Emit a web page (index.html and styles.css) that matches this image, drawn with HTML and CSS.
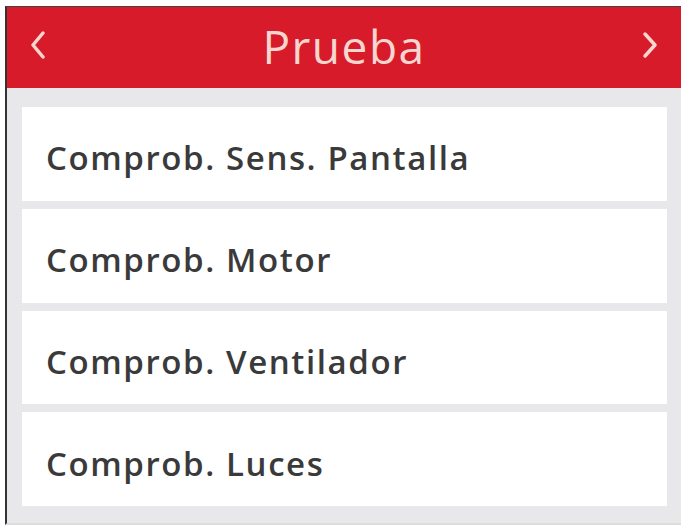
FILE: index.html
```html
<!DOCTYPE html>
<html>
<head>
    <title>Prueba</title>
    <link rel="stylesheet" href="styles.css">
</head>
<body>
    <div class="screen">
        <div class="topbar">
            <svg class="nav" width="18" height="28" viewBox="0 0 18 28">
                <polyline points="14,2 4,14 14,26" />
            </svg>
            <h1>Prueba</h1>
            <svg class="nav" width="18" height="28" viewBox="0 0 18 28">
                <polyline points="4,3 14,14 4,25" />
            </svg>
        </div>

        <div class="menu">
            <div class="item">Comprob. Sens. Pantalla</div>
            <div class="item">Comprob. Motor</div>
            <div class="item">Comprob. Ventilador</div>
            <div class="item">Comprob. Luces</div>
        </div>
    </div>
</body>
</html>
```

FILE: styles.css
```css
body {
    margin: 0;
    background: #fff;
    font-family: "Open Sans", "DejaVu Sans", sans-serif;
}

.screen {
    margin: 6px 0 0 5px;
    width: 674px;
    height: 516px;
    border-top: 1px solid #444;
    border-left: 2px solid #333;
    border-bottom: 2px solid #ddd;
    background: #e8e8ea;
    display: flex;
    flex-direction: column;
}

.topbar {
    height: 81px;
    background: #d81b2a;
    display: flex;
    align-items: center;
    justify-content: space-between;
    padding: 0 22px 0 22px;
    color: #f6d6cf;
}
.topbar h1 {
    margin: -4px 0 0 0;
    font-size: 46px;
    font-weight: normal;
    letter-spacing: 1.5px;
}
.nav {
    margin-top: -6px;
}
.nav polyline {
    fill: none;
    stroke: #f6d6cf;
    stroke-width: 3.5;
    stroke-linecap: round;
    stroke-linejoin: round;
}

.menu {
    flex: 1;
    display: flex;
    flex-direction: column;
    gap: 8px;
    padding: 19px 14px 17px 15px;
}
.item {
    flex: 1;
    background: #fff;
    display: flex;
    align-items: center;
    padding: 8px 0 0 24px;
    font-size: 33px;
    font-weight: 600;
    letter-spacing: 1.6px;
    color: #3a3a3a;
}
```
